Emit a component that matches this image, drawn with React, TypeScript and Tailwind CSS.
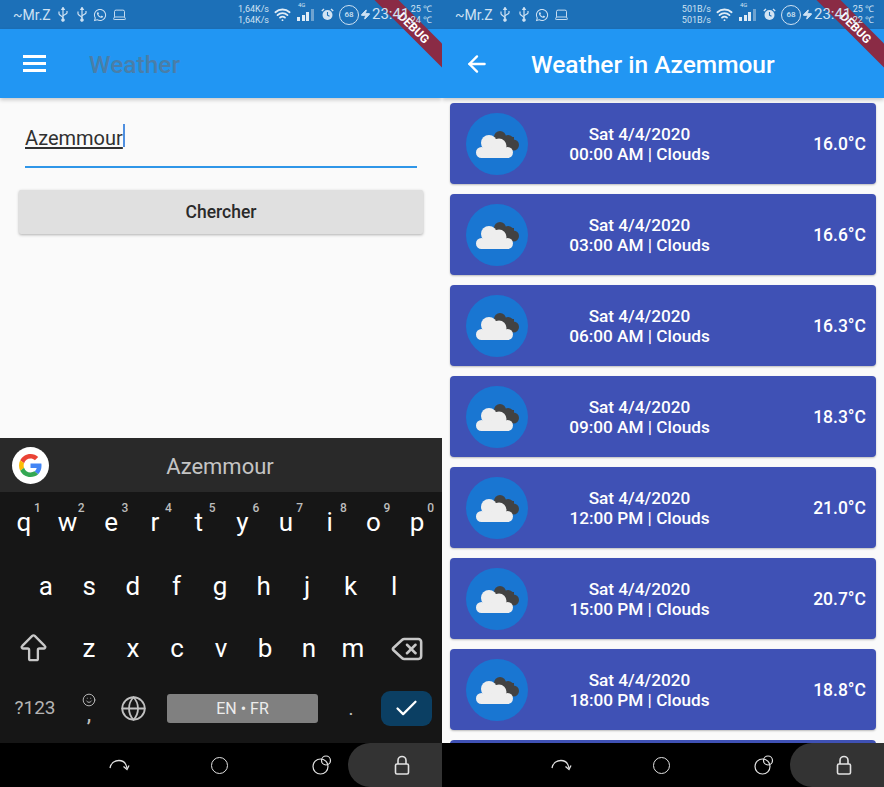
import React from 'react';
import { ArrowBigUp, ArrowLeft, Check, Delete, Globe, Laptop, Smile, Wifi, Zap } from 'lucide-react';
import { FaWhatsapp } from 'react-icons/fa';

const roboto = { fontFamily: 'Roboto, sans-serif' };

const forecast = [
  { time: '00:00 AM', temp: '16.0°C' },
  { time: '03:00 AM', temp: '16.6°C' },
  { time: '06:00 AM', temp: '16.3°C' },
  { time: '09:00 AM', temp: '18.3°C' },
  { time: '12:00 PM', temp: '21.0°C' },
  { time: '15:00 PM', temp: '20.7°C' },
  { time: '18:00 PM', temp: '18.8°C' },
];

const topRow = [
  ['q', '1'], ['w', '2'], ['e', '3'], ['r', '4'], ['t', '5'],
  ['y', '6'], ['u', '7'], ['i', '8'], ['o', '9'], ['p', '0'],
];

const UsbGlyph = ({ className }: { className?: string }) => (
  <svg width="12" height="15" viewBox="0 0 12 15" fill="none" stroke="currentColor" strokeWidth="1.2" className={className}>
    <path d="M6 2v10.500" />
    <path d="M4.800 2.500 6 .5l1.200 2z" fill="currentColor" />
    <path d="M2 4.500v2.200c0 1.500 4 2.500 4 4.300" />
    <path d="M10 4v2c0 1.300-4 1.800-4 3.200" />
    <circle cx="6" cy="13" r="1.200" fill="currentColor" />
  </svg>
);

const AlarmIcon = () => (
  <svg width="13" height="13" viewBox="0 0 13 13" className="text-[#d3e4f3]">
    <circle cx="6.500" cy="7" r="5" fill="currentColor" />
    <path d="M6.500 4v3.200l2 1" stroke="#1c70b8" strokeWidth="1.100" fill="none" />
    <path d="M0.800 3 3 1M12.200 3 10 1" stroke="currentColor" strokeWidth="1.400" />
  </svg>
);

const SignalIcon = () => (
  <div className="relative flex h-[13px] w-[19px] items-end gap-[1.5px]">
    <span className="absolute -top-[6px] left-[1px] text-[6px] leading-none text-[#cfe2f3]">4G</span>
    <div className="h-[4px] w-[3px] bg-[#e0ecf6]" />
    <div className="h-[6px] w-[3px] bg-[#e0ecf6]" />
    <div className="h-[9px] w-[3px] bg-[#e0ecf6]" />
    <div className="h-[12px] w-[3px] bg-[#6fa3d0]" />
  </div>
);

const StatusBar = ({ speed, lowTemp }: { speed: string; lowTemp: string }) => (
  <div className="h-[29px] shrink-0 bg-[#1c70b8]">
    {/* icons sit above the debug ribbon, the bar colour below it */}
    <div className="relative z-20 flex h-[29px] items-center pl-[13px] text-[#cfe2f3]">
      <span className="w-[44px] text-[14px] leading-none">~Mr.Z</span>
      <UsbGlyph />
      <UsbGlyph className="ml-[7px]" />
      <FaWhatsapp size={14} className="ml-[5px]" />
      <Laptop size={15} strokeWidth={1.5} className="ml-[5px]" />
      <div className="ml-auto flex w-[34px] flex-col items-end text-[9px] leading-[11px]">
        <span>{speed}</span>
        <span>{speed}</span>
      </div>
      <Wifi size={17} strokeWidth={2.6} className="ml-[5px] text-[#e0ecf6]" />
      <div className="ml-[6px]"><SignalIcon /></div>
      <div className="ml-[5px]"><AlarmIcon /></div>
      <div className="ml-[5px] flex h-[20px] w-[20px] items-center justify-center rounded-full border-[1.5px] border-[#cfe2f3] text-[8px] font-medium">68</div>
      <Zap size={11} fill="currentColor" className="ml-[1px]" />
      <span className="ml-[1px] w-[35px] text-[15px] leading-none">23:41</span>
      <div className="mr-[10px] flex w-[25px] flex-col items-end text-[9px] leading-[11px]">
        <span>25 ℃</span>
        <span>{lowTemp}</span>
      </div>
    </div>
  </div>
);

const DebugRibbon = () => (
  <div className="absolute right-[-32px] top-[19px] z-10 flex h-[17px] w-[120px] rotate-45 items-center justify-center bg-[#8a2b45] text-[12px] font-bold text-white">
    DEBUG
  </div>
);

const NavBar = () => (
  <div className="relative z-10 flex h-[44px] shrink-0 items-center bg-black text-[#e2e2e2]">
    <svg width="22" height="20" viewBox="0 0 22 20" fill="none" stroke="currentColor" strokeWidth="1.3" className="ml-[108px]">
      <path d="M2 13C3 8 7 5.500 11 5.500s7 2.500 8 7.500" />
      <path d="M15.500 11.500 19 14.500l2-4" />
    </svg>
    <div className="ml-[81px] h-[17px] w-[17px] rounded-full border-[1.3px] border-[#e2e2e2]" />
    <svg width="22" height="22" viewBox="0 0 22 22" fill="none" stroke="currentColor" strokeWidth="1.2" className="ml-[83px]">
      <circle cx="9.500" cy="12.500" r="7.500" />
      <circle cx="15" cy="6.500" r="4.500" />
    </svg>
    <div className="ml-[15px] flex h-[44px] flex-1 items-center justify-center rounded-l-[24px] bg-[#333333] pl-[14px]">
      <svg width="16" height="20" viewBox="0 0 16 20" fill="none" stroke="currentColor" strokeWidth="1.600">
        <path d="M4 9V5.500a4 4 0 0 1 8 0V9" />
        <rect x="1.500" y="9" width="13" height="10" rx="1.500" />
      </svg>
    </div>
  </div>
);

const GoogleLogo = () => (
  <svg width="23" height="23" viewBox="0 0 48 48">
    <path fill="#EA4335" d="M24 9.500c3.500 0 6.700 1.200 9.200 3.600l6.900-6.900C35.900 2.400 30.500 0 24 0 14.600 0 6.500 5.400 2.600 13.200l8 6.200C12.500 13.700 17.800 9.500 24 9.500z" />
    <path fill="#4285F4" d="M47 24.500c0-1.600-.1-3.100-.4-4.500H24v9h12.900c-.6 3-2.200 5.500-4.700 7.200l7.700 6c4.500-4.200 7.100-10.300 7.100-17.700z" />
    <path fill="#FBBC05" d="M10.500 28.600c-.5-1.400-.8-3-.8-4.600s.3-3.200.8-4.600l-8-6.200C.9 16.500 0 20.100 0 24s.9 7.500 2.600 10.800l7.900-6.200z" />
    <path fill="#34A853" d="M24 48c6.500 0 11.900-2.100 15.900-5.800l-7.700-6c-2.200 1.400-5 2.300-8.200 2.300-6.200 0-11.500-4.200-13.400-9.900l-8 6.200C6.500 42.600 14.600 48 24 48z" />
  </svg>
);

const Keyboard = () => (
  <div className="shrink-0 text-white">
    <div className="flex h-[54px] items-center bg-[#292929] pl-[12px]">
      <div className="flex h-[37px] w-[37px] items-center justify-center rounded-full bg-white">
        <GoogleLogo />
      </div>
      <div className="flex-1 pr-[51px] pt-[2px] text-center text-[22px] text-[#c4c4c4]">Azemmour</div>
    </div>
    <div className="bg-[#161616]">
      <div className="grid h-[63px] grid-cols-10 pl-[2px] pr-[3px]">
        {topRow.map(([letter, digit]) => (
          <div key={letter} className="relative flex items-center justify-center pb-[2px] text-[26px]">
            {letter}
            <span className="absolute left-[32px] top-[9px] text-[12px] font-medium leading-[14px] text-[#bdbdbd]">{digit}</span>
          </div>
        ))}
      </div>
      <div className="grid h-[62px] grid-cols-9 pl-[24px] pr-[26px]">
        {'asdfghjkl'.split('').map(letter => (
          <div key={letter} className="flex items-center justify-center text-[26px]">{letter}</div>
        ))}
      </div>
      <div className="flex h-[63px] items-center">
        <div className="flex w-[67px] justify-center text-[#c8c8c8]">
          <ArrowBigUp size={35} strokeWidth={1.6} />
        </div>
        <div className="grid flex-1 grid-cols-7">
          {'zxcvbnm'.split('').map(letter => (
            <div key={letter} className="flex items-center justify-center text-[26px]">{letter}</div>
          ))}
        </div>
        <div className="flex w-[67px] justify-center pr-[4px] text-[#c8c8c8]">
          <Delete size={34} strokeWidth={1.8} />
        </div>
      </div>
      <div className="flex h-[63px] items-center pb-[7px]">
        <div className="w-[70px] pt-[1px] text-center text-[19px] text-[#b4b4b4]">?123</div>
        <div className="flex w-[38px] flex-col items-center text-[#c0c0c0]">
          <Smile size={14} strokeWidth={1.6} />
          <span className="-mt-[3px] text-[20px] font-medium leading-[20px]">,</span>
        </div>
        <Globe size={27} strokeWidth={1.6} className="ml-[12px] text-[#c0c0c0]" />
        <div className="ml-[20px] flex h-[29px] w-[151px] items-center justify-center rounded-[3px] bg-[#808080] pt-[1px] text-[16px] text-[#ececec]">
          EN • FR
        </div>
        <div className="w-[63px] pl-[3px] pt-[4px] text-center text-[16px] font-medium text-[#c0c0c0]">.</div>
        <div className="flex h-[35px] w-[51px] items-center justify-center rounded-[9px] bg-[#0b3f63]">
          <Check size={27} strokeWidth={2} />
        </div>
      </div>
    </div>
  </div>
);

const SearchScreen = () => (
  <div className="relative flex h-[787px] w-[442px] flex-col overflow-hidden bg-[#fafafa]">
    <StatusBar speed="1,64K/s" lowTemp="24 ℃" />
    <div className="flex h-[69px] shrink-0 items-center bg-[#2196f3] shadow-[0_2px_4px_rgba(0,0,0,0.2)]">
      <div className="ml-[23px] flex w-[23px] flex-col gap-[4.5px]">
        <div className="h-[2.5px] bg-white" />
        <div className="h-[2.5px] bg-white" />
        <div className="h-[2.5px] bg-white" />
      </div>
      <span className="ml-[43px] pt-[4px] text-[24.5px] font-medium text-[#4a7ea8]">Weather</span>
    </div>
    <div className="flex flex-1 flex-col px-[19px]">
      <div className="mx-[6px] mt-[25px] flex h-[45px] items-start border-b-2 border-[#2f96e8]">
        <span className="text-[20px] leading-[30px] text-[#303030] underline underline-offset-2">Azemmour</span>
        <div className="mt-[1px] h-[23px] w-[2px] bg-[#4f8fe0]" />
      </div>
      <div className="mt-[22px] flex h-[44px] items-center justify-center rounded-[2px] bg-[#e0e0e0] text-[17.5px] font-medium text-[#2a2a2a] shadow-[0_1px_3px_rgba(0,0,0,0.3)]">
        Chercher
      </div>
    </div>
    <Keyboard />
    <NavBar />
    <DebugRibbon />
  </div>
);

const CloudIcon = () => (
  <svg width="44" height="28" viewBox="0 0 44 28">
    <g fill="#424242">
      <circle cx="24" cy="6" r="6" />
      <circle cx="32" cy="10" r="6" />
      <circle cx="37.500" cy="14" r="5.500" />
      <rect x="22" y="6" width="16" height="13" />
    </g>
    <g fill="#eeeeee">
      <circle cx="5.500" cy="21.500" r="5.500" />
      <circle cx="13" cy="12" r="8" />
      <circle cx="23" cy="15" r="7.500" />
      <circle cx="31.500" cy="21.500" r="5.500" />
      <rect x="5" y="17" width="27" height="10" />
    </g>
  </svg>
);

const ForecastCard = ({ time, temp }: { time: string; temp: string }) => (
  <div className="flex h-[81px] shrink-0 items-center rounded-[4px] bg-[#3f51b5] pl-[16px] pr-[10px] text-white shadow-[0_1px_2px_rgba(0,0,0,0.25)]">
    <div className="flex h-[62px] w-[62px] shrink-0 items-center justify-center rounded-full bg-[#1976d2] pl-[2px] pt-[2px]">
      <CloudIcon />
    </div>
    <div className="w-[223px] text-center text-[17.2px] font-medium leading-[20px]">
      <div>Sat 4/4/2020</div>
      <div>{time} | Clouds</div>
    </div>
    <div className="ml-auto pt-[1px] text-[17.5px] font-medium">{temp}</div>
  </div>
);

const ForecastScreen = () => (
  <div className="relative flex h-[787px] w-[442px] flex-col overflow-hidden bg-[#fafafa]">
    <StatusBar speed="501B/s" lowTemp="22 ℃" />
    <div className="flex h-[69px] shrink-0 items-center bg-[#2196f3] text-white shadow-[0_2px_4px_rgba(0,0,0,0.2)]">
      <ArrowLeft size={26} strokeWidth={2.2} className="ml-[22px]" />
      <span className="ml-[41px] pt-[4px] text-[24.5px] font-medium">Weather in Azemmour</span>
    </div>
    <div className="flex flex-1 flex-col gap-[10px] overflow-hidden px-[8px] pt-[5px]">
      {forecast.map(item => (
        <ForecastCard key={item.time} time={item.time} temp={item.temp} />
      ))}
      <div className="h-[81px] shrink-0 rounded-[4px] bg-[#3f51b5]" />
    </div>
    <NavBar />
    <DebugRibbon />
  </div>
);

const App: React.FC = () => (
  <div className="flex h-[787px] w-[884px] overflow-hidden" style={roboto}>
    <SearchScreen />
    <ForecastScreen />
  </div>
);

export default App;
